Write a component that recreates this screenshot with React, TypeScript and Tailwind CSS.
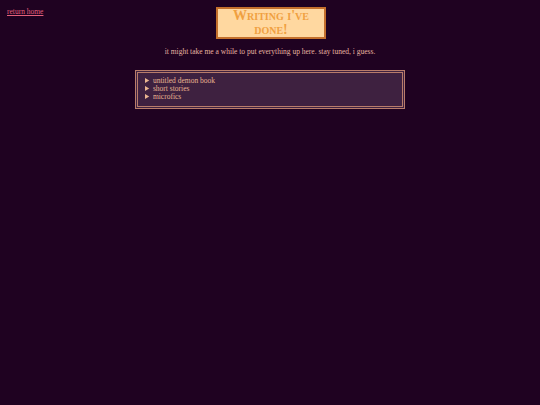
import React from "react";

const serif = { fontFamily: '"Liberation Serif", "Times New Roman", serif' };

const entries = ["untitled demon book", "short stories", "microfics"];

export default function App() {
  return (
    <div
      className="min-h-[405px] w-full bg-[#1f0221] text-[7.5px] leading-[8px] text-[#e8b4a0]"
      style={serif}
    >
      <div className="relative pt-[7px]">
        <a
          href="#"
          className="absolute left-[7px] top-[8px] text-[#e4607c] underline"
        >
          return home
        </a>
        <div className="flex justify-center">
          <h1 className="ml-[2px] w-[110px] border-2 border-[#c4702c] bg-[#ffd8a0] px-1 text-center text-[14px] font-bold leading-[14px] text-[#f0a040] [font-variant:small-caps]">
            Writing i've done!
          </h1>
        </div>
        <p className="mt-[9px] text-center">
          it might take me a while to put everything up here. stay tuned, i guess.
        </p>
        <div className="mx-auto mt-[14px] w-[270px] border-[3px] border-double border-[#b87c6a] bg-[#3e2140] px-[7px] pt-[4px] pb-[5px] text-[#eab590]">
          {entries.map((e) => (
            <details key={e}>
              <summary className="cursor-pointer">{e}</summary>
            </details>
          ))}
        </div>
      </div>
    </div>
  );
}
